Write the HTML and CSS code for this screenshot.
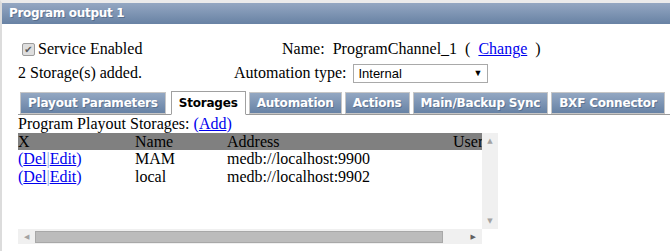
FILE: index.html
```html
<!DOCTYPE html>
<html lang="en">
<head>
    <meta charset="UTF-8">
    <title>Program output 1</title>
    <link rel="stylesheet" href="styles.css">
</head>
<body>
    <div class="panel">
        <div class="titlebar">Program output 1</div>

        <div class="content">
            <div class="info-row first">
                <label class="info-left service">
                    <span class="checkbox">&#10004;</span>
                    <span>Service Enabled</span>
                </label>
                <div class="name-block">
                    Name:&nbsp; ProgramChannel_1 &nbsp;(&nbsp; <a href="#">Change</a> &nbsp;)
                </div>
            </div>
            <div class="info-row second">
                <div class="info-left storages-count">2 Storage(s) added.</div>
                <div class="automation">
                    <span>Automation type:</span>
                    <div class="select">
                        <span>Internal</span>
                        <span class="select-arrow">&#9660;</span>
                    </div>
                </div>
            </div>

            <div class="tabs">
                <div class="tab">Playout Parameters</div>
                <div class="tab active">Storages</div>
                <div class="tab">Automation</div>
                <div class="tab">Actions</div>
                <div class="tab">Main/Backup Sync</div>
                <div class="tab">BXF Connector</div>
            </div>

            <div class="storages-title">Program Playout Storages: <a href="#" class="link-group">(<u>Add</u>)</a></div>

            <div class="scroller">
                <div class="viewport">
                    <table class="storage-table">
                        <thead>
                            <tr>
                                <th class="col-x">X</th>
                                <th class="col-name">Name</th>
                                <th class="col-addr">Address</th>
                                <th class="col-user">User</th>
                            </tr>
                        </thead>
                        <tbody>
                            <tr>
                                <td><span class="link-group">(<a href="#">Del</a><span class="sep">|</span><a href="#">Edit</a>)</span></td>
                                <td>MAM</td>
                                <td>medb://localhost:9900</td>
                                <td></td>
                            </tr>
                            <tr>
                                <td><span class="link-group">(<a href="#">Del</a><span class="sep">|</span><a href="#">Edit</a>)</span></td>
                                <td>local</td>
                                <td>medb://localhost:9902</td>
                                <td></td>
                            </tr>
                        </tbody>
                    </table>
                </div>
                <div class="vscroll">
                    <span class="arrow up">&#9650;</span>
                    <span class="arrow down">&#9660;</span>
                </div>
                <div class="hscroll">
                    <span class="arrow left">&#9664;</span>
                    <div class="thumb"></div>
                    <span class="arrow right">&#9654;</span>
                </div>
                <div class="corner"></div>
            </div>
        </div>
    </div>
</body>
</html>
```

FILE: styles.css
```css
body {
    margin: 0;
    background: #ffffff;
    font-family: "Liberation Serif", "Times New Roman", serif;
    font-size: 16px;
    color: #000000;
}

.panel {
    border-top: 3px solid #ebebeb;
    border-left: 2px solid #dcdcdc;
    height: 248px;
}

.titlebar {
    height: 21px;
    line-height: 21px;
    padding-left: 7px;
    background: linear-gradient(#94a7c2, #6882a4);
    color: #ffffff;
    font-family: "DejaVu Sans", Verdana, sans-serif;
    font-weight: bold;
    font-size: 12px;
    letter-spacing: -0.3px;
    text-shadow: 1px 1px 0 rgba(40, 55, 80, 0.35);
}

.content {
    padding-left: 16px;
}

a {
    color: #0000ee;
}

.info-row {
    display: flex;
    align-items: center;
}

.info-row.first {
    margin-top: 16px;
    height: 18px;
}

.info-row.second {
    margin-top: 5px;
    height: 20px;
}

.service {
    width: 264px;
    display: flex;
    align-items: center;
}

.checkbox {
    box-sizing: border-box;
    width: 13px;
    height: 13px;
    margin: 0 3px 0 4px;
    border: 1px solid #9c9c9c;
    border-radius: 2px;
    background: #dedede;
    color: #5a5a5a;
    font-family: "DejaVu Sans", sans-serif;
    font-size: 10px;
    line-height: 11px;
    text-align: center;
}

.storages-count {
    width: 216px;
}

.automation {
    display: flex;
    align-items: center;
    gap: 7px;
}

.select {
    width: 124px;
    height: 17px;
    border: 1px solid #a9a9a9;
    padding: 0 5px 0 4px;
    display: flex;
    align-items: center;
    justify-content: space-between;
    font-family: "Liberation Sans", Arial, sans-serif;
    font-size: 13px;
}

.select-arrow {
    font-size: 9px;
}

.tabs {
    margin-top: 8px;
    display: flex;
    align-items: flex-end;
    border-bottom: 1px solid #9a9a9a;
    padding-left: 2px;
}

.tab {
    flex-shrink: 0;
    white-space: nowrap;
    height: 20px;
    line-height: 20px;
    padding: 0 7px;
    margin-right: 3px;
    border: 1px solid #c6c6c6;
    background: linear-gradient(#93a7c2, #6782a5);
    color: #ffffff;
    font-family: "DejaVu Sans", Verdana, sans-serif;
    font-weight: bold;
    font-size: 12px;
    letter-spacing: -0.2px;
    text-shadow: 1px 1px 0 rgba(40, 55, 80, 0.35);
}

.tab.active {
    height: 22px;
    line-height: 23px;
    margin-bottom: -1px;
    margin-left: 2px;
    border-color: #a0a0a0;
    border-bottom-color: #ffffff;
    background: #ffffff;
    color: #000000;
    text-shadow: none;
}

.storages-title {
    height: 18px;
    line-height: 18px;
}

.link-group {
    color: #0000ee;
    text-decoration: none;
}

.link-group .sep {
    color: #7f9fe0;
}

.scroller {
    display: grid;
    grid-template-columns: 464px 16px;
    grid-template-rows: 96px 15px;
}

.viewport {
    overflow: hidden;
}

.storage-table {
    border-collapse: collapse;
    width: 560px;
    table-layout: fixed;
}

.storage-table th,
.storage-table td {
    padding: 0;
    font-weight: normal;
    text-align: left;
    white-space: nowrap;
}

.storage-table th {
    background: #808080;
    height: 17px;
    line-height: 17px;
}

.storage-table td {
    height: 18px;
    line-height: 18px;
}

.col-x { width: 117px; }
.col-name { width: 92px; }
.col-addr { width: 226px; }
.col-user { width: 125px; }

.vscroll {
    background: #f0f0f0;
    display: flex;
    flex-direction: column;
    justify-content: space-between;
    align-items: center;
    padding: 4px 0;
}

.arrow {
    font-family: "DejaVu Sans", sans-serif;
    font-size: 7px;
    line-height: 8px;
    color: #a3a3a3;
}

.hscroll {
    background: #f0f0f0;
    display: flex;
    align-items: center;
    padding: 0 6px;
    gap: 6px;
}

.hscroll .right {
    color: #606060;
}

.thumb {
    flex: 1;
    height: 10px;
    margin-right: 22px;
    background: #bcbcbc;
    border: 1px solid #a8a8a8;
}

.corner {
    background: #ffffff;
}
```
